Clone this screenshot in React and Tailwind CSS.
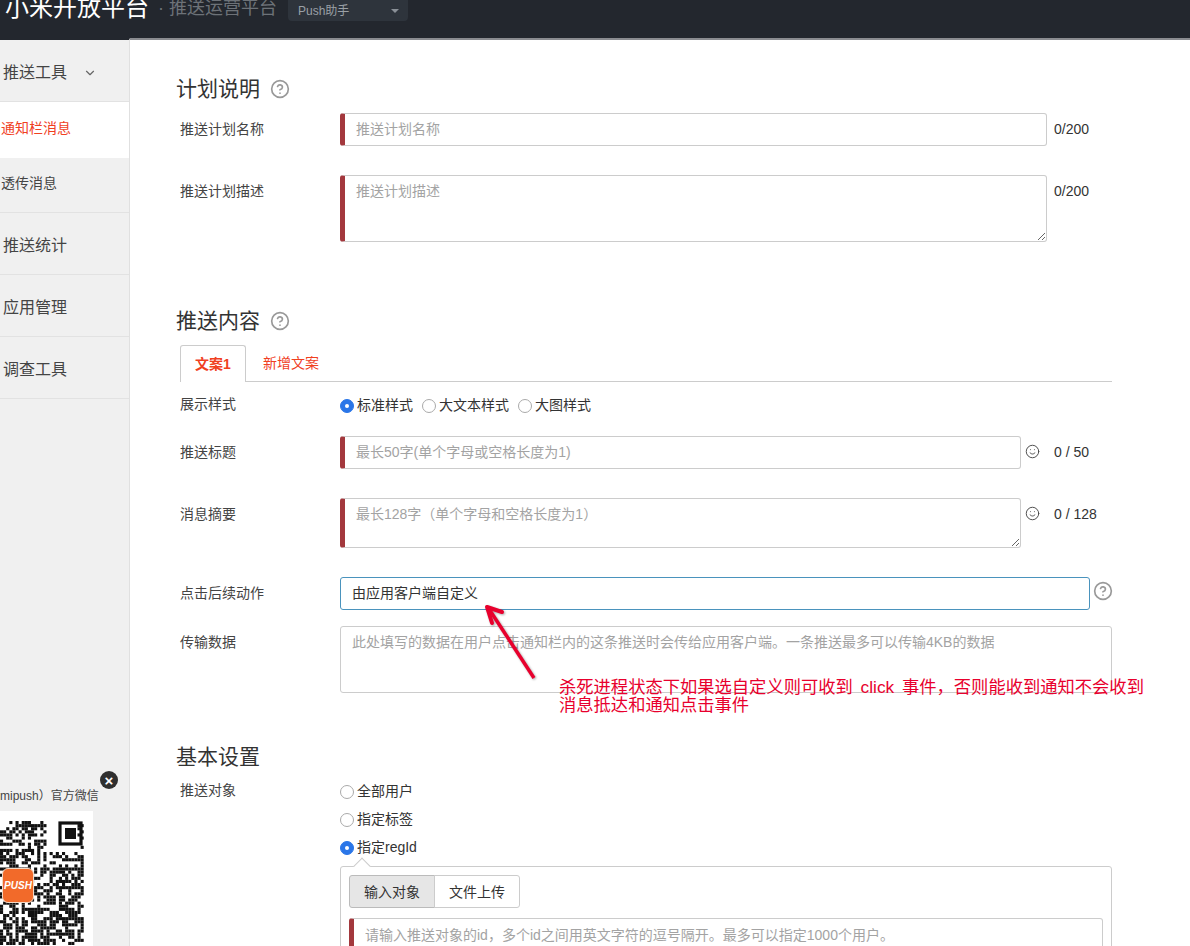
import { CircleHelp, ChevronDown, Smile } from "lucide-react";

const fieldBase = "block rounded-[3px] border border-[#ccc] bg-white text-sm text-[#333] outline-none placeholder:text-[#a3a3a3]";
const required = "border-l-[5px] border-l-[#a3383d] pl-[11px] pr-3";

// pseudo random modules for the qr picture
function qrCells() {
  const cells = [];
  let seed = 73;
  for (let y = 0; y < 40; y++) {
    for (let x = 0; x < 27; x++) {
      seed = (seed * 1103515245 + 12345) & 0x7fffffff;
      const inFinder = x >= 15 && x <= 24 && y >= 0 && y <= 9;
      if (!inFinder && (seed >> 16) % 100 < 52) cells.push([x, y]);
    }
  }
  return cells;
}

function QrCode() {
  return (
    <svg width="93" height="136" viewBox="0 0 93 136" className="block">
      <rect width="93" height="136" fill="#fff" />
      <g transform="translate(0 10)" fill="#111">
        {qrCells().map(([x, y]) => (
          <rect key={x + "-" + y} x={x * 3.1} y={y * 3.1} width="3.1" height="3.1" />
        ))}
      </g>
      <rect x="60" y="12" width="21" height="21" fill="none" stroke="#111" strokeWidth="3.2" />
      <rect x="65" y="17" width="11" height="11" fill="#111" />
    </svg>
  );
}

function SideItem({ children, active, big, height }) {
  return (
    <div className={`flex items-center border-b ${height} ${active ? "border-white bg-white text-[#f0401f]" : "border-[#e2e2e2] text-[#444]"} ${big ? "pl-[3px] pt-1 text-base" : "pb-1 pl-px text-sm"}`}>
      {children}
    </div>
  );
}

function Title({ children, help = true, className }) {
  return (
    <div className={`-ml-px flex h-8 items-center gap-[10px] text-[21px] text-[#333] ${className}`}>
      {children}
      {help && <CircleHelp size={20} strokeWidth={2} className="text-[#999]" />}
    </div>
  );
}

function Row({ label, className = "", children }) {
  return (
    <div className={`flex items-start ${className}`}>
      <div className="flex h-[33px] w-[163px] shrink-0 items-center pb-[2px] pl-[3px] text-sm text-[#444]">{label}</div>
      {children}
    </div>
  );
}

function Radio({ checked, children }) {
  return (
    <label className="flex items-center gap-[3px] text-sm text-[#333]">
      <span className={`mt-px flex h-[14px] w-[14px] items-center justify-center rounded-full border ${checked ? "border-[#2a76e8] bg-[#2a76e8]" : "border-[#aaa] bg-white"}`}>
        {checked && <span className="h-1 w-1 rounded-full bg-white" />}
      </span>
      {children}
    </label>
  );
}

export default function App() {
  return (
    <div className="relative h-[946px] w-[1190px] overflow-hidden bg-white font-['Liberation_Sans','Noto_Sans_CJK_SC',sans-serif]">
      <header className="flex h-[38px] items-start bg-[#23272e]">
        <div className="-mt-[8px] ml-[5px] text-2xl leading-8 text-white">小米开放平台</div>
        <div className="-mt-[6px] ml-[9px] text-lg leading-7 text-[#6d7278]">· 推送运营平台</div>
        <div className="ml-[11px] flex h-[21px] w-[120px] items-center justify-between rounded-b bg-[#2e343c] pl-[10px] pr-[9px] text-xs text-[#9aa0a6]">
          Push助手
          <span className="h-0 w-0 border-x-4 border-t-4 border-x-transparent border-t-[#8a9097]" />
        </div>
      </header>

      <div className="flex h-[908px]">
        <aside className="relative w-[130px] shrink-0 border-r border-t-2 border-r-[#e0e0e0] border-t-[#23272e] bg-[#f0f0f0]">
          <SideItem big height="h-[62px]">
            推送工具
            <ChevronDown size={14} className="ml-4 text-[#666]" />
          </SideItem>
          <SideItem active height="h-[56px]">通知栏消息</SideItem>
          <SideItem height="h-[55px]">透传消息</SideItem>
          <SideItem big height="h-[62px]">推送统计</SideItem>
          <SideItem big height="h-[62px]">应用管理</SideItem>
          <SideItem big height="h-[62px]">调查工具</SideItem>

          <div className="mt-[389px] h-4 text-xs leading-4 text-[#444]">mipush）官方微信</div>
          <div className="mt-[7px] w-[93px]">
            <QrCode />
          </div>
          <div className="absolute left-[100px] top-[731px] flex h-[18px] w-[18px] items-center justify-center rounded-full bg-[#2f2f2f] text-[15px] font-bold leading-none text-white">×</div>
          <div className="absolute left-[2px] top-[828px] flex h-[35px] w-[32px] items-center justify-center rounded-md border border-[#f3d9c6] bg-[#f26a2a] text-[10px] font-bold italic leading-none text-white">PUSH</div>
        </aside>

        <main className="min-w-0 flex-1 border-t-2 border-t-[#8a8c90] pl-[47px]">
          <Title className="mt-[33px]">计划说明</Title>
          <Row label="推送计划名称" className="mt-2">
            <input readOnly placeholder="推送计划名称" className={`${fieldBase} ${required} h-[33px] w-[707px] pb-[2px]`} />
            <span className="ml-[7px] text-sm leading-[33px] text-[#333]">0/200</span>
          </Row>
          <Row label="推送计划描述" className="mt-[29px]">
            <textarea readOnly placeholder="推送计划描述" className={`${fieldBase} ${required} h-[67px] w-[707px] py-[5px]`} />
            <span className="ml-[7px] text-sm leading-[33px] text-[#333]">0/200</span>
          </Row>

          <Title className="mt-[63px]">推送内容</Title>
          <div className="ml-[3px] mt-2 flex h-[37px] w-[932px] border-b border-[#ccc]">
            <div className="flex h-[37px] w-[66px] items-center justify-center rounded-t-[3px] border border-b-0 border-[#ccc] bg-white pb-px text-sm font-bold text-[#f0401f]">文案1</div>
            <div className="ml-[17px] flex items-center pb-px text-sm text-[#f0401f]">新增文案</div>
          </div>
          <div className="mt-[11px] flex h-6 items-center">
            <div className="w-[163px] pb-[3px] pl-[3px] text-sm text-[#444]">展示样式</div>
            <div className="flex gap-[9px]">
              <Radio checked>标准样式</Radio>
              <Radio>大文本样式</Radio>
              <Radio>大图样式</Radio>
            </div>
          </div>
          <Row label="推送标题" className="mt-[19px]">
            <input readOnly placeholder="最长50字(单个字母或空格长度为1)" className={`${fieldBase} ${required} h-[33px] w-[681px] pb-[2px]`} />
            <Smile size={15} strokeWidth={1.5} className="ml-[4px] mt-[8px] text-[#444]" />
            <span className="ml-[14px] text-sm leading-[33px] text-[#333]">0 / 50</span>
          </Row>
          <Row label="消息摘要" className="mt-[29px]">
            <textarea readOnly placeholder="最长128字（单个字母和空格长度为1）" className={`${fieldBase} ${required} h-[50px] w-[681px] py-[5px]`} />
            <Smile size={15} strokeWidth={1.5} className="ml-[4px] mt-[8px] text-[#444]" />
            <span className="ml-[14px] text-sm leading-[33px] text-[#333]">0 / 128</span>
          </Row>
          <Row label="点击后续动作" className="mt-[29px]">
            <div className="flex h-[33px] w-[750px] items-center rounded-[3px] border border-[#4a93bd] pb-[2px] pl-[11px] text-sm text-[#333]">由应用客户端自定义</div>
            <CircleHelp size={20} strokeWidth={2} className="ml-[3px] mt-[4px] text-[#999]" />
          </Row>
          <Row label="传输数据" className="mt-4">
            <textarea readOnly placeholder="此处填写的数据在用户点击通知栏内的这条推送时会传给应用客户端。一条推送最多可以传输4KB的数据" className={`${fieldBase} h-[67px] w-[772px] resize-none px-[11px] py-[5px]`} />
          </Row>

          <Title help={false} className="mt-12">基本设置</Title>
          <div className="mt-1 flex items-start">
            <div className="flex h-7 w-[163px] shrink-0 items-center pb-[2px] pl-[3px] text-sm text-[#444]">推送对象</div>
            <div className="w-[772px]">
              <div className="flex h-7 items-center"><Radio>全部用户</Radio></div>
              <div className="flex h-7 items-center"><Radio>指定标签</Radio></div>
              <div className="flex h-7 items-center"><Radio checked>指定regId</Radio></div>
              <div className="relative mt-[5px] rounded-[3px] border border-[#ccc] p-2">
                <div className="absolute -top-[7px] left-[15px] h-3 w-3 rotate-45 border-l border-t border-[#ccc] bg-white" />
                <div className="flex">
                  <div className="flex h-[33px] w-[86px] items-center justify-center rounded-l-[3px] border border-[#bbb] bg-[#e6e6e6] text-sm text-[#333]">输入对象</div>
                  <div className="-ml-px flex h-[33px] w-[86px] items-center justify-center rounded-r-[3px] border border-[#ccc] text-sm text-[#333]">文件上传</div>
                </div>
                <input readOnly placeholder="请输入推送对象的id，多个id之间用英文字符的逗号隔开。最多可以指定1000个用户。" className={`${fieldBase} ${required} mt-[10px] h-[33px] w-[754px]`} />
              </div>
            </div>
          </div>
        </main>
      </div>

      <svg width="70" height="90" viewBox="0 0 70 90" className="absolute left-[478px] top-[600px] drop-shadow-[1px_1px_1px_rgba(0,0,0,0.35)]">
        <path d="M56 78 L11 9" stroke="#e8002d" strokeWidth="3.5" fill="none" />
        <path d="M9 7 L24 12 M9 7 L14 23" stroke="#e8002d" strokeWidth="4" fill="none" strokeLinecap="round" />
      </svg>
      <div className="absolute left-[559px] top-[678px] whitespace-nowrap text-[17.3px] leading-[18px] text-[#e8002d] [word-spacing:3px]">
        <div>杀死进程状态下如果选自定义则可收到 click 事件，否则能收到通知不会收到</div>
        <div>消息抵达和通知点击事件</div>
      </div>
    </div>
  );
}
